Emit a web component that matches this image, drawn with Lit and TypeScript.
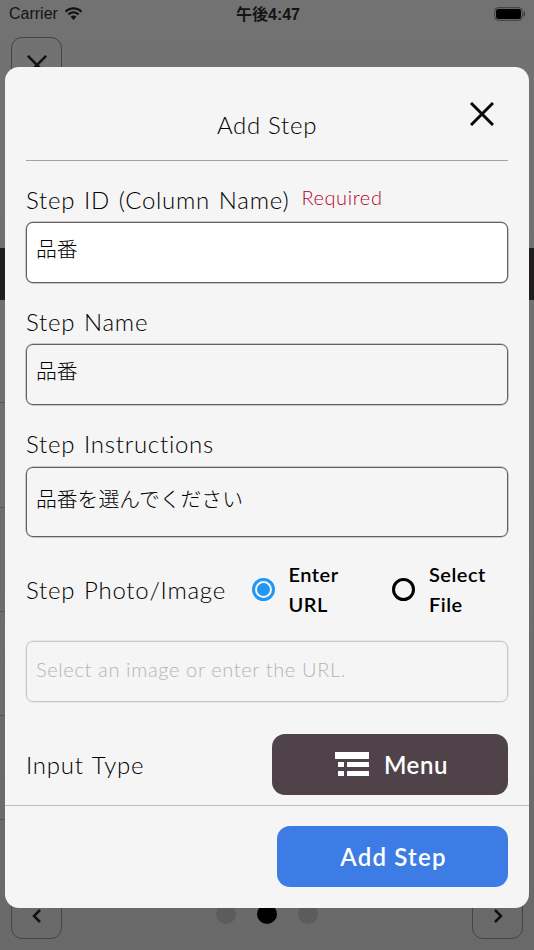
import { LitElement, html, css } from "lit";
import { customElement } from "lit/decorators.js";

const closeIcon = (size: number, w: number) => html`<svg width=${size} height=${size} viewBox="0 0 24 24" fill="none" stroke="currentColor" stroke-width=${w} stroke-linecap="butt"><path d="M1 1L23 23M23 1L1 23"/></svg>`;

@customElement("app-root")
export class AppRoot extends LitElement {
  static styles = css`
    :host { display: block; width: 534px; height: 950px; position: relative; overflow: hidden; font-family: "Lato", "Noto Sans CJK JP", sans-serif; background: linear-gradient(#727272, #6f6f6f 45%, #696969); color: #000; }
    * { box-sizing: border-box; }
    .status { display: grid; grid-template-columns: 1fr auto 1fr; align-items: center; height: 28px; padding: 0 7px 0 9px; font-family: "Liberation Sans", "Noto Sans CJK JP", sans-serif; color: #141414; font-size: 16px; }
    .carrier { display: flex; align-items: center; gap: 6px; }
    .time { font-weight: 700; font-size: 16px; position: relative; top: -1px; }
    .battery { justify-self: end; display: flex; }
    .under { position: absolute; inset: 0; }
    .ghost { position: absolute; width: 51px; border: 1px solid #444; border-radius: 11px; display: flex; justify-content: center; color: #111; }
    .g-top { left: 11px; top: 37px; height: 50px; padding-top: 17px; }
    .g-left { left: 11px; top: 888px; height: 51px; padding-top: 20px; }
    .g-right { left: 472px; top: 888px; height: 51px; padding-top: 20px; }
    .band { position: absolute; left: 0; right: 0; top: 248px; height: 52px; background: #211e1f; }
    .rule { position: absolute; left: 0; width: 100px; height: 1px; background: #565656; }
    .dots { position: absolute; left: 216px; top: 904px; display: flex; gap: 21px; }
    .dot { width: 20px; height: 20px; border-radius: 50%; background: #5c5c5c; }
    .dot.on { background: #000; }

    .modal { position: absolute; left: 5px; top: 67px; width: 524px; height: 841px; background: #f5f5f5; border-radius: 14px; display: flex; flex-direction: column; }
    .head { margin: 0 21px; height: 94px; border-bottom: 1px solid #a3a3a3; display: flex; justify-content: center; padding-top: 42px; font-size: 24px; line-height: 32px; letter-spacing: 0.700px; font-weight: 300; }
    .x { position: absolute; left: 465px; top: 35px; display: flex; color: #0a0a0a; }
    .body { flex: 1; padding: 0 21px; display: flex; flex-direction: column; }
    .label { font-size: 24px; line-height: 30px; letter-spacing: 0.750px; word-spacing: 1.500px; font-weight: 300; }
    .label-row { display: flex; align-items: center; gap: 12px; height: 30px; margin-top: 24px; margin-bottom: 7px; }
    .req { color: #b80030; font-size: 20px; font-weight: 300; letter-spacing: 0.600px; position: relative; top: -3px; }
    .next { margin-top: 24px; margin-bottom: 7px; height: 30px; }
    .next.gap8 { margin-bottom: 8px; }
    .field { height: 61px; border: 1px solid #655d60; box-shadow: 0 0 0 0.5px rgba(100, 92, 95, 0.6); border-radius: 7px; padding: 12px 9px; font-size: 20.800px; line-height: 28px; color: #000; font-weight: 300; }
    .field.white { background: #fff; }
    .field.tall { height: 70px; padding-top: 17px; }
    .photo { display: flex; align-items: center; margin-top: 16px; height: 72px; }
    .photo .label { width: 225.500px; flex: none; margin-top: 2px; }
    .radio { width: 23px; height: 23px; border-radius: 50%; border: 3px solid #000; flex: none; display: flex; align-items: center; justify-content: center; }
    .radio.on { border-color: #2196f3; }
    .radio.on::after { content: ""; width: 13px; height: 13px; border-radius: 50%; background: #2196f3; }
    .opt { display: flex; align-items: center; gap: 14px; width: 140.500px; flex: none; }
    .opt span { font-weight: 600; font-size: 20px; line-height: 30px; letter-spacing: 0.500px; width: 70px; }
    .url { height: 61px; margin-top: 16px; border: 1px solid #c8c8c8; box-shadow: 0 0 0 0.5px rgba(200, 200, 200, 0.6); border-radius: 7px; padding: 13px 9px; font-size: 20px; font-weight: 300; line-height: 28px; color: #b4b4b4; letter-spacing: 0.640px; }
    .type { display: flex; align-items: center; justify-content: space-between; margin-top: 32px; }
    .menu { width: 236px; height: 61px; padding-left: 3px; background: #4f4349; border-radius: 13px; color: #fff; display: flex; align-items: center; justify-content: center; gap: 15px; font-size: 24px; font-weight: 600; letter-spacing: 0.600px; }
    .foot { border-top: 1px solid #bdbdbd; height: 103px; padding: 20px 21px 0; display: flex; justify-content: flex-end; }
    .add { width: 231px; height: 61px; padding-left: 2px; background: #3d7ce5; border-radius: 13px; color: #fff; display: flex; align-items: center; justify-content: center; font-size: 24px; font-weight: 600; letter-spacing: 1.200px; }
  `;

  render() {
    return html`
      <div class="under">
        <div class="status">
          <div class="carrier">Carrier
            <svg width="19" height="14" viewBox="0 0 19 14" fill="#111"><path d="M9.500 2.600c2.800 0 5.300 1.100 7.200 2.900l1.500-1.600C15.900 1.700 12.900.3 9.500.3S3.100 1.700.8 3.900l1.500 1.600C4.200 3.700 6.700 2.600 9.500 2.600z"/><path d="M9.500 6.600c1.700 0 3.200.6 4.400 1.700l1.500-1.600c-1.600-1.500-3.600-2.400-5.900-2.400s-4.300.9-5.900 2.400l1.500 1.600C6.300 7.200 7.800 6.600 9.500 6.600z"/><path d="M9.500 8.600c-1.100 0-2.100.4-2.900 1.100l2.900 3.400 2.900-3.400c-.8-.7-1.800-1.100-2.900-1.100z"/></svg>
          </div>
          <div class="time">午後4:47</div>
          <div class="battery">
            <svg width="33" height="14" viewBox="0 0 33 14"><rect x="0.700" y="0.700" width="27.600" height="12.600" rx="3.500" fill="none" stroke="#3c3c3c" stroke-width="1"/><rect x="2" y="2" width="25" height="10" rx="2.200" fill="#000"/><rect x="29.500" y="4.500" width="1.500" height="5" rx="0.700" fill="#3c3c3c"/></svg>
          </div>
        </div>
        <div class="ghost g-top">${closeIcon(20, 3)}</div>
        <div class="band"></div>
        ${[402, 507, 611, 715, 819].map((y) => html`<div class="rule" style="top:${y}px"></div>`)}
        <div class="ghost g-left"><svg width="12" height="14" viewBox="0 0 12 14" fill="none" stroke="currentColor" stroke-width="2.500"><path d="M9 1L3 7l6 6"/></svg></div>
        <div class="ghost g-right"><svg width="12" height="14" viewBox="0 0 12 14" fill="none" stroke="currentColor" stroke-width="2.500"><path d="M3 1l6 6-6 6"/></svg></div>
        <div class="dots"><div class="dot"></div><div class="dot on"></div><div class="dot"></div></div>
      </div>
      <div class="modal">
        <div class="head">Add Step</div>
        <div class="x">${closeIcon(24, 3)}</div>
        <div class="body">
          <div class="label-row"><span class="label">Step ID (Column Name)</span><span class="req">Required</span></div>
          <div class="field white">品番</div>
          <div class="label next">Step Name</div>
          <div class="field">品番</div>
          <div class="label next gap8">Step Instructions</div>
          <div class="field tall">品番を選んでください</div>
          <div class="photo">
            <div class="label">Step Photo/Image</div>
            <div class="opt"><div class="radio on"></div><span>Enter URL</span></div>
            <div class="opt"><div class="radio"></div><span>Select File</span></div>
          </div>
          <div class="url">Select an image or enter the URL.</div>
          <div class="type">
            <div class="label">Input Type</div>
            <div class="menu">
              <svg width="34" height="25" viewBox="0 0 34 25" fill="#fff"><rect x="0" y="0" width="34" height="7"/><rect x="3" y="10" width="6" height="5"/><rect x="12" y="10" width="22" height="5"/><rect x="3" y="19" width="6" height="5"/><rect x="12" y="19" width="22" height="5"/></svg>
              Menu
            </div>
          </div>
        </div>
        <div class="foot"><div class="add">Add Step</div></div>
      </div>
    `;
  }
}
